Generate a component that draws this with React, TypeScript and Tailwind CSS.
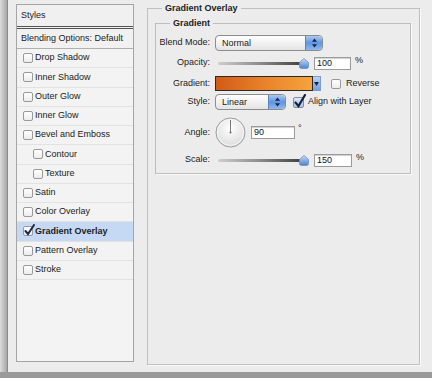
import React from "react";

const font = { fontFamily: '"Liberation Sans", Arial, sans-serif' };

interface StyleRow {
  label: string;
  indent?: boolean;
  checked?: boolean;
}

const rows: StyleRow[] = [
  { label: "Drop Shadow" },
  { label: "Inner Shadow" },
  { label: "Outer Glow" },
  { label: "Inner Glow" },
  { label: "Bevel and Emboss" },
  { label: "Contour", indent: true },
  { label: "Texture", indent: true },
  { label: "Satin" },
  { label: "Color Overlay" },
  { label: "Gradient Overlay", checked: true },
  { label: "Pattern Overlay" },
  { label: "Stroke" },
];

const Check: React.FC<{ checked?: boolean }> = ({ checked }) => (
  <span className="relative w-[10px] h-[10px] shrink-0 rounded-[2px] border border-[#9a9a9a] bg-gradient-to-b from-white to-[#ececec]">
    {checked && (
      <svg className="absolute -top-[3px] left-0" width="11" height="12" viewBox="0 0 11 12">
        <path d="M1.5 7 L4 10 L10 1" fill="none" stroke="#1c2a4a" strokeWidth="2" strokeLinecap="round" />
      </svg>
    )}
  </span>
);

const Stepper: React.FC = () => (
  <span className="flex items-center justify-center w-[17px] h-full rounded-r-[4px] border-l border-[#5b84c0] bg-gradient-to-b from-[#a9c9f2] via-[#5f95e0] to-[#8fb8ee]">
    <svg width="7" height="10" viewBox="0 0 7 10">
      <path d="M3.5 0.5 L6 3.8 L1 3.8 Z" fill="#12234a" />
      <path d="M3.5 9.5 L6 6.2 L1 6.2 Z" fill="#12234a" />
    </svg>
  </span>
);

const Select: React.FC<{ value: string; width: string }> = ({ value, width }) => (
  <div className={`flex items-center h-[16px] ${width} rounded-[4px] border border-[#8c8c8c] bg-gradient-to-b from-white to-[#e4e4e4] overflow-hidden`}>
    <span className="flex-1 pl-[6px] text-[9px] text-[#1a1a1a] leading-none">{value}</span>
    <Stepper />
  </div>
);

const Thumb: React.FC = () => (
  <svg width="10" height="11" viewBox="0 0 10 11" className="-ml-[5px] shrink-0">
    <defs>
      <linearGradient id="th" x1="0" y1="0" x2="0" y2="1">
        <stop offset="0" stopColor="#c9dcf6" />
        <stop offset="1" stopColor="#4a82cf" />
      </linearGradient>
    </defs>
    <path d="M5 0.5 L9.5 4.5 L9.5 8.5 Q9.5 10.5 7.5 10.5 L2.5 10.5 Q0.5 10.5 0.5 8.5 L0.5 4.5 Z" fill="url(#th)" stroke="#6f8fb8" strokeWidth="0.8" />
  </svg>
);

const Slider: React.FC = () => (
  <div className="flex items-center w-[94px] pl-[3px]">
    <div className="flex-1 h-[3px] rounded-full bg-gradient-to-r from-[#cfcfcf] via-[#8a8a8a] to-[#3e3e3e]" />
    <Thumb />
  </div>
);

const Field: React.FC<{ value: string; width: string }> = ({ value, width }) => (
  <div className={`h-[13px] ${width} border border-[#9b9b9b] bg-white shadow-[inset_0_1px_1px_#cfcfcf] pl-[2px] text-[9px] leading-[11px] text-[#111]`}>
    {value}
  </div>
);

const Label: React.FC<{ children: React.ReactNode }> = ({ children }) => (
  <span className="w-[54px] shrink-0 text-right text-[9px] text-[#222]">{children}</span>
);

const Dial: React.FC = () => (
  <svg width="31" height="31" viewBox="0 0 31 31">
    <defs>
      <radialGradient id="dial" cx="0.5" cy="0.35" r="0.6">
        <stop offset="0" stopColor="#ffffff" />
        <stop offset="1" stopColor="#dedede" />
      </radialGradient>
    </defs>
    <circle cx="15.5" cy="15.5" r="14.5" fill="url(#dial)" stroke="#9d9d9d" />
    <circle cx="15.5" cy="15.5" r="13" fill="none" stroke="#f8f8f8" />
    <line x1="15.5" y1="15.5" x2="15.5" y2="3" stroke="#7a7a7a" strokeWidth="1" />
    <circle cx="15.5" cy="15.5" r="1" fill="#6a6a6a" />
  </svg>
);

const App: React.FC = () => {
  return (
    <div className="w-[432px] h-[378px] flex flex-col bg-[#9c9c9c] overflow-hidden" style={font}>
      <div className="flex h-[372px]">
        <div className="w-[7px] bg-gradient-to-r from-[#dcdcdc] to-[#a6a6a6]" />
        <div className="w-[425px] flex items-start bg-[#ececec] border-l border-[#8a8a8a]">
          {/* styles list */}
          <div className="ml-[8px] mt-[4px] w-[118px] h-[358px] border border-[#a5a5a5] bg-[#f3f3f3] flex flex-col">
            <div className="h-[24px] flex items-center pl-[4px] text-[9px] text-[#222] bg-[#f0f0f0] border-b-[3px] border-double border-[#555]">
              Styles
            </div>
            <div className="h-[20px] flex items-center pl-[4px] text-[9px] text-[#222] bg-[#f1f1f1] border-b border-[#b0b0b0]">
              Blending Options: Default
            </div>
            {rows.map((r) => (
              <div
                key={r.label}
                className={`h-[19.25px] flex items-center gap-[2px] text-[9px] text-[#222] border-b border-[#e2e2e2] ${
                  r.indent ? "pl-[16px]" : "pl-[6px]"
                } ${r.checked ? "bg-[#c6d9f4] font-bold" : "bg-[#f3f3f3]"}`}
              >
                <Check checked={r.checked} />
                <span>{r.label}</span>
              </div>
            ))}
          </div>

          {/* gradient overlay panel */}
          <fieldset className="ml-[13px] mt-[3px] w-[273px] h-[362px] border border-[#c0c0c0] shadow-[1px_1px_0_#fafafa]">
            <legend className="ml-[14px] px-[3px] text-[9px] font-bold leading-[11px] text-[#222]">Gradient Overlay</legend>
            <fieldset className="mt-[4px] ml-[7px] mr-[8px] border border-[#bdbdbd] shadow-[1px_1px_0_#fafafa] pt-[6px] pb-[7px]">
              <legend className="ml-[14px] px-[3px] text-[9px] font-bold leading-[11px] text-[#222]">Gradient</legend>
              <div className="flex flex-col">
                <div className="flex items-center gap-[5px] h-[16px]">
                  <Label>Blend Mode:</Label>
                  <Select value="Normal" width="w-[108px]" />
                </div>

                <div className="flex items-center gap-[5px] h-[12px] mt-[6px]">
                  <Label>Opacity:</Label>
                  <Slider />
                  <Field value="100" width="w-[37px]" />
                  <span className="ml-[-1px] text-[9px] text-[#222] -mt-[4px]">%</span>
                </div>

                <div className="flex items-center gap-[5px] h-[15px] mt-[7px]">
                  <Label>Gradient:</Label>
                  <div className="flex h-[15px]">
                    <div className="w-[98px] h-full border border-[#2a2a2a] bg-gradient-to-r from-[#d25a16] via-[#e9822a] to-[#f6a33e]" />
                    <div className="w-[8px] h-full flex items-center justify-center bg-gradient-to-b from-[#b8d2f4] to-[#6f9fe0] border border-l-0 border-[#7d9cc8]">
                      <svg width="5" height="4" viewBox="0 0 5 4">
                        <path d="M0 0 L5 0 L2.5 4 Z" fill="#12234a" />
                      </svg>
                    </div>
                  </div>
                  <span className="ml-[5px] flex items-center gap-[5px] text-[9px] text-[#222]">
                    <Check />
                    Reverse
                  </span>
                </div>

                <div className="flex items-center gap-[5px] h-[16px] mt-[3px]">
                  <Label>Style:</Label>
                  <Select value="Linear" width="w-[71px]" />
                  <span className="ml-[2px] flex items-center gap-[4px] text-[9px] text-[#222]">
                    <span className="relative w-[11px] h-[11px] shrink-0 rounded-[2px] border border-[#8a8a8a] bg-gradient-to-b from-[#dce8f8] to-[#a9c5ec]">
                      <svg className="absolute -top-[4px] left-0" width="12" height="14" viewBox="0 0 12 14">
                        <path d="M1.5 8.5 L4.5 12 L11 1" fill="none" stroke="#15233f" strokeWidth="2.2" strokeLinecap="round" />
                      </svg>
                    </span>
                    Align with Layer
                  </span>
                </div>

                <div className="flex items-center gap-[5px] h-[31px] mt-[7px]">
                  <Label>Angle:</Label>
                  <Dial />
                  <Field value="90" width="w-[44px]" />
                  <span className="ml-[-2px] text-[9px] text-[#222] -mt-[8px]">°</span>
                </div>

                <div className="flex items-center gap-[5px] h-[12px] mt-[6px]">
                  <Label>Scale:</Label>
                  <Slider />
                  <Field value="150" width="w-[38px]" />
                  <span className="ml-[-1px] text-[9px] text-[#222] -mt-[4px]">%</span>
                </div>
              </div>
            </fieldset>
          </fieldset>
        </div>
      </div>
      <div className="flex-1 bg-[#9a9a9a]" />
    </div>
  );
};

export default App;
